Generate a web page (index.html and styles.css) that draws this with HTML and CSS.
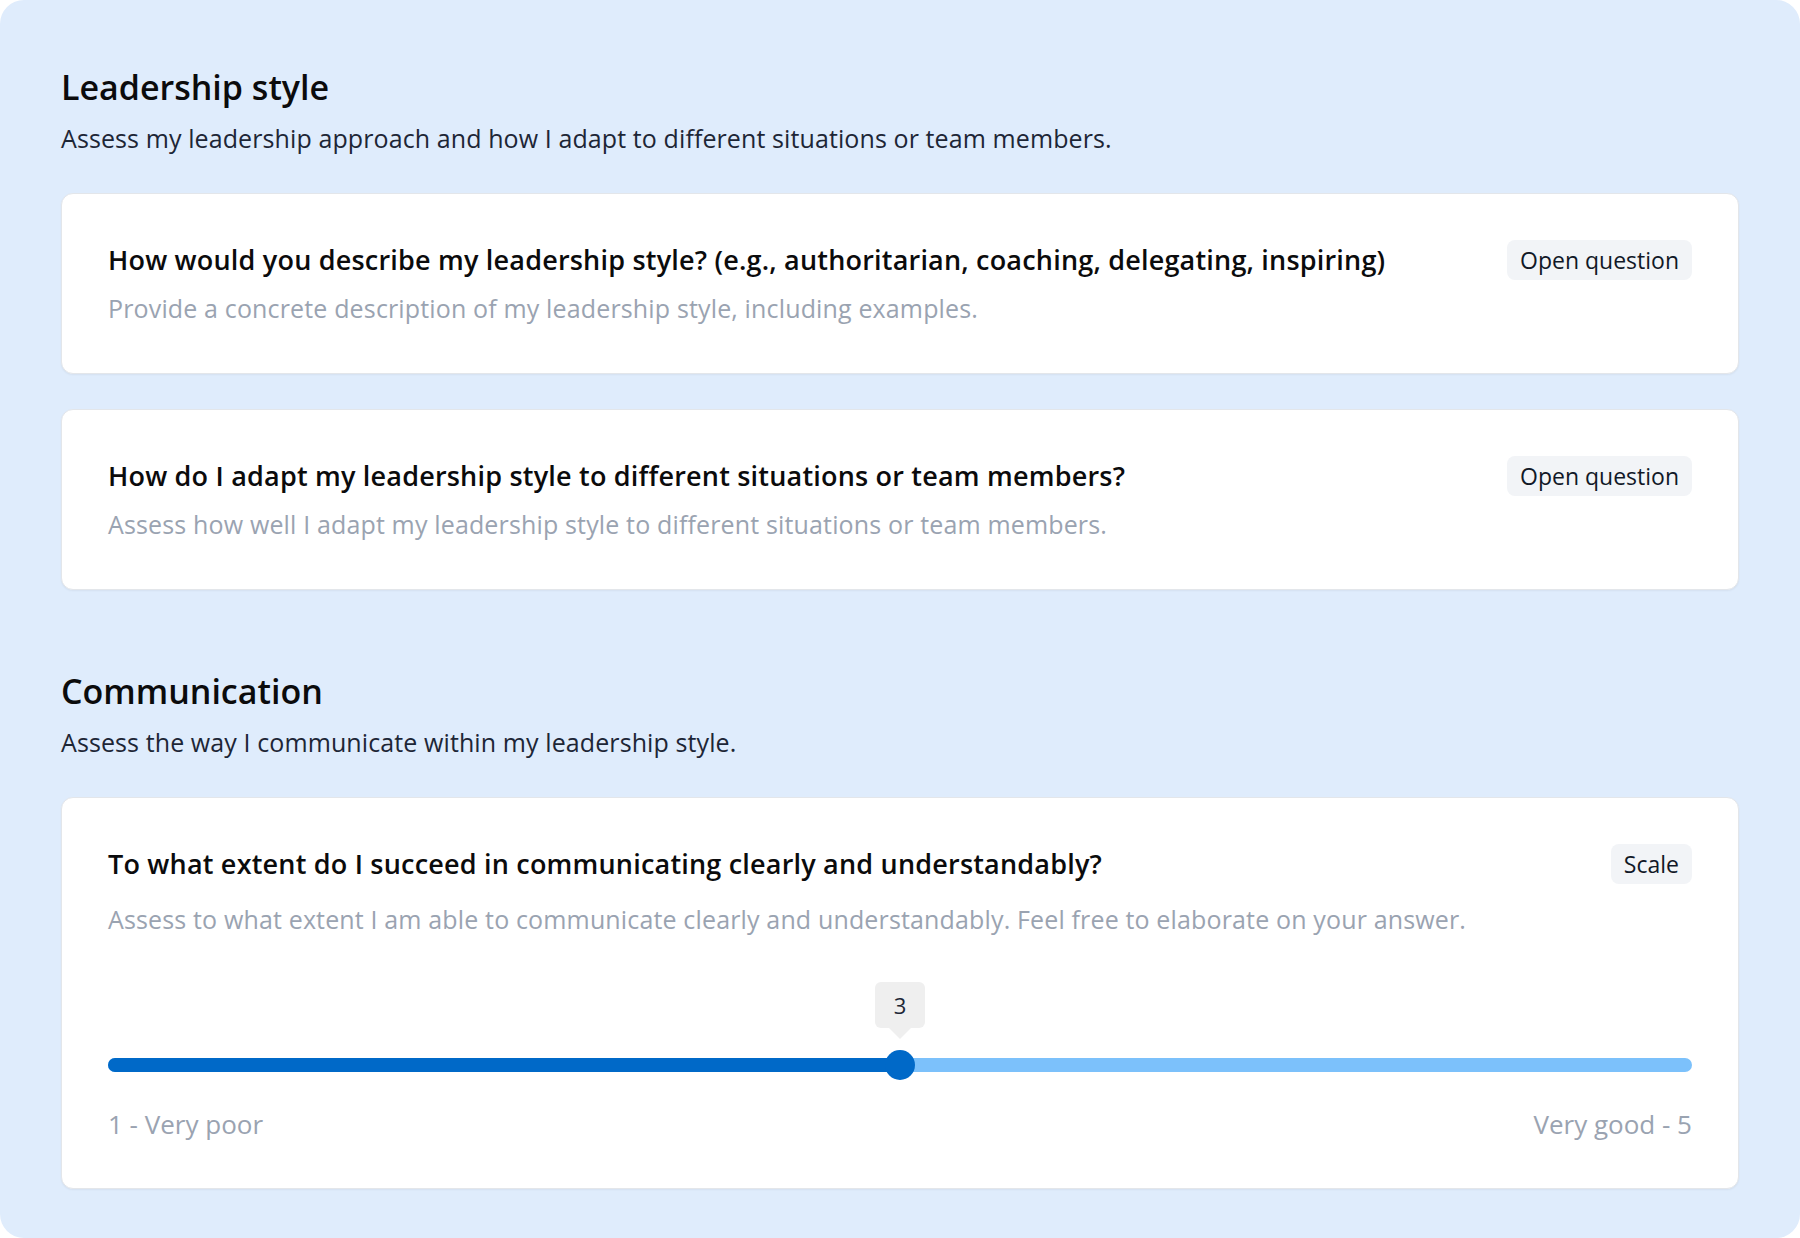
FILE: index.html
```
<!DOCTYPE html>
<html>
<head>
    <title>Feedback questions</title>
    <link rel="stylesheet" href="styles.css">
</head>
<body>
    <div class="panel">
        <div class="section">
            <h2 class="section-title">Leadership style</h2>
            <p class="section-text">Assess my leadership approach and how I adapt to different situations or team members.</p>

            <div class="card">
                <div class="card-head">
                    <h3 class="question">How would you describe my leadership style? (e.g., authoritarian, coaching, delegating, inspiring)</h3>
                    <span class="badge">Open question</span>
                </div>
                <p class="hint">Provide a concrete description of my leadership style, including examples.</p>
            </div>

            <div class="card">
                <div class="card-head">
                    <h3 class="question">How do I adapt my leadership style to different situations or team members?</h3>
                    <span class="badge">Open question</span>
                </div>
                <p class="hint">Assess how well I adapt my leadership style to different situations or team members.</p>
            </div>
        </div>

        <div class="section">
            <h2 class="section-title">Communication</h2>
            <p class="section-text">Assess the way I communicate within my leadership style.</p>

            <div class="card scale-card">
                <div class="card-head">
                    <h3 class="question">To what extent do I succeed in communicating clearly and understandably?</h3>
                    <span class="badge">Scale</span>
                </div>
                <p class="hint">Assess to what extent I am able to communicate clearly and understandably. Feel free to elaborate on your answer.</p>

                <!-- value 3 on a 1-5 scale -->
                <div class="slider">
                    <div class="track">
                        <div class="track-fill" style="width: 50%"></div>
                    </div>
                    <div class="thumb" style="left: 50%">
                        <span class="tip">3</span>
                    </div>
                </div>
                <div class="scale-labels">
                    <span>1 - Very poor</span>
                    <span>Very good - 5</span>
                </div>
            </div>
        </div>
    </div>
</body>
</html>
```

FILE: styles.css
```
body {
    margin: 0;
    background-color: #fff;
    font-family: "Open Sans", Lato, Arial, sans-serif;
}
.panel {
    box-sizing: border-box;
    min-height: 100vh;
    background-color: #dfecfc;
    border-radius: 24px;
    padding: 65px 61px 49px;
}
.section + .section {
    margin-top: 79px;
}
.section-title {
    margin: 0;
    font-size: 34px;
    line-height: 44px;
    font-weight: 600;
    color: #0b0b0c;
}
.section-text {
    margin: 13px 0 39px;
    font-size: 25px;
    line-height: 32px;
    letter-spacing: 0.1px;
    color: #1d2636;
}
.card {
    background-color: #fff;
    border: 1px solid #e3e6ea;
    border-radius: 12px;
    box-shadow: 0 1px 2px rgba(0, 0, 0, 0.05);
    padding: 46px 46px 49px;
}
.card + .card {
    margin-top: 35px;
}
.card-head {
    display: flex;
    justify-content: space-between;
    align-items: center;
    gap: 24px;
}
.question {
    margin: 0;
    font-size: 27px;
    line-height: 32px;
    letter-spacing: 0.2px;
    font-weight: 600;
    color: #0b0b0c;
}
.badge {
    flex-shrink: 0;
    height: 40px;
    line-height: 40px;
    padding: 0 13px;
    border-radius: 8px;
    background-color: #f2f4f7;
    font-size: 23px;
    color: #111827;
}
.hint {
    margin: 12px 0 0;
    font-size: 25px;
    line-height: 32px;
    letter-spacing: 0.15px;
    color: #9aa3b1;
}
.scale-card {
    padding-bottom: 48px;
}
.scale-card .hint {
    margin-top: 19px;
}
.slider {
    position: relative;
    display: flex;
    align-items: center;
    height: 30px;
    margin-top: 115px;
}
.track {
    flex: 1;
    height: 14px;
    border-radius: 7px;
    background-color: #7cc1fb;
    overflow: hidden;
}
.track-fill {
    height: 100%;
    background-color: #0069c8;
}
.thumb {
    position: absolute;
    top: 0;
    width: 30px;
    height: 30px;
    margin-left: -15px;
    border-radius: 50%;
    background-color: #0069c8;
}
.tip {
    position: absolute;
    bottom: 52px;
    left: 50%;
    width: 50px;
    height: 46px;
    margin-left: -25px;
    border-radius: 6px;
    background-color: #efefef;
    text-align: center;
    line-height: 46px;
    font-size: 22px;
    color: #1d2636;
}
.tip:after {
    content: "";
    position: absolute;
    top: 100%;
    left: 50%;
    margin-left: -11px;
    border-left: 11px solid transparent;
    border-right: 11px solid transparent;
    border-top: 11px solid #efefef;
}
.scale-labels {
    display: flex;
    justify-content: space-between;
    margin-top: 28px;
    font-size: 26px;
    line-height: 32px;
    color: #9aa3b1;
}
```
